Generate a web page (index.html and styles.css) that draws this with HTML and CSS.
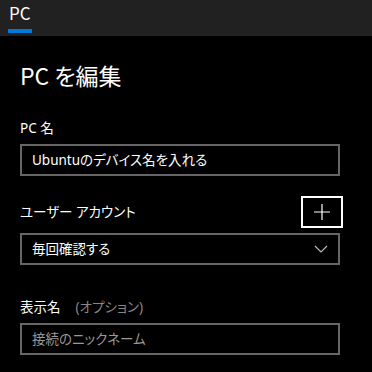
FILE: index.html
```html
<!DOCTYPE html>
<html lang="ja">
<head>
  <meta charset="UTF-8" />
  <title>PC を編集</title>
  <link rel="stylesheet" href="styles.css">
</head>
<body>
  <div class="tab-bar">
    <div class="tab active">PC</div>
  </div>

  <div class="page">
    <h1 class="page-title">PC を編集</h1>

    <div class="field">
      <label class="field-label">PC 名</label>
      <div class="text-box">Ubuntuのデバイス名を入れる</div>
    </div>

    <div class="field account-field">
      <div class="label-row">
        <label class="field-label">ユーザー アカウント</label>
        <button class="add-button" title="追加">
          <svg width="18" height="18" viewBox="0 0 18 18">
            <path d="M9 1v16M1 9h16" stroke="#fff" stroke-width="1.2" fill="none"/>
          </svg>
        </button>
      </div>
      <div class="text-box select-box">
        <span>毎回確認する</span>
        <svg class="chevron" width="14" height="8" viewBox="0 0 14 8">
          <path d="M1 1l6 6 6-6" stroke="#bbb" stroke-width="1.2" fill="none"/>
        </svg>
      </div>
    </div>

    <div class="field display-field">
      <label class="field-label">表示名<span class="optional">(オプション)</span></label>
      <div class="text-box placeholder">接続のニックネーム</div>
    </div>
  </div>
</body>
</html>
```

FILE: styles.css
```css
body {
  margin: 0;
  font-family: "Noto Sans", "Noto Sans CJK JP", sans-serif;
  font-feature-settings: "palt";
  background-color: #000;
  color: #fff;
  width: 372px;
  height: 372px;
  overflow: hidden;
}

.tab-bar {
  height: 36px;
  background-color: #212121;
  display: flex;
  padding-left: 8px;
}

.tab {
  font-family: "Noto Sans CJK JP", sans-serif;
  font-size: 17px;
  line-height: 26px;
  height: 29px;
  color: #fff;
  padding: 0 1px;
}

.tab.active {
  border-bottom: 4px solid #0078d7;
}

.page {
  padding: 0 32px 0 20px;
}

.page-title {
  margin: 0;
  padding-top: 24px;
  font-family: "Noto Sans CJK JP", sans-serif;
  font-size: 23px;
  font-weight: 400;
  line-height: 30px;
}

.field {
  margin-top: 28px;
}

.account-field {
  margin-top: 20px;
}

.display-field {
  margin-top: 32px;
}

.field-label {
  display: block;
  font-size: 13.5px;
  line-height: 20px;
  margin-bottom: 6px;
}

.label-row {
  display: flex;
  justify-content: space-between;
  align-items: center;
  margin-bottom: 5px;
}

.label-row .field-label {
  margin-bottom: 0;
}

.add-button {
  width: 42px;
  height: 32px;
  margin-right: -3px;
  border: 2px solid #fff;
  background: transparent;
  display: flex;
  align-items: center;
  justify-content: center;
  padding: 0;
}

.text-box {
  height: 32px;
  box-sizing: border-box;
  border: 2px solid #666;
  padding: 0 10px;
  font-size: 13.5px;
  line-height: 28px;
  color: #fff;
}

.select-box {
  display: flex;
  justify-content: space-between;
  align-items: center;
}

.placeholder {
  color: #999;
}

.optional {
  color: #888;
  margin-left: 15px;
}
```
